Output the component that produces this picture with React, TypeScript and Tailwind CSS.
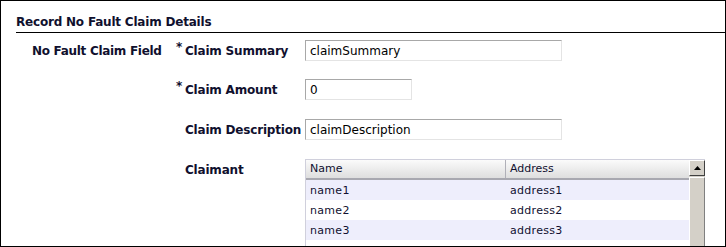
import React from "react";

const font = { fontFamily: '"DejaVu Sans", Verdana, sans-serif' };

function Field({ star, label, children, className = "" }: { star?: boolean; label: string; children: React.ReactNode; className?: string }) {
  return (
    <div className={`flex ${className}`}>
      <div className="w-[9px] shrink-0 text-[12px] leading-[12px] pt-[1px] font-bold text-[#10102e]">{star ? "*" : ""}</div>
      <div className="w-[120px] shrink-0 flex items-center h-[21px] text-[12px] font-bold text-[#10102e] whitespace-nowrap tracking-[-0.2px]">{label}</div>
      {children}
    </div>
  );
}

function Input({ value, w }: { value: string; w: string }) {
  return (
    <div className={`${w} h-[21px] border border-t-[#a8a8a8] border-l-[#a8a8a8] border-r-[#e4e4e4] border-b-[#e4e4e4] bg-white flex items-center pl-[4px] text-[12px] text-black`}>
      {value}
    </div>
  );
}

export default function App() {
  const rows = ["1", "2", "3", "4"];
  return (
    <div style={font} className="w-[726px] h-[247px] border border-black bg-white overflow-hidden">
      <div className="ml-[15px] pt-[14px] pb-[3px] border-b border-black text-[12px] leading-[14px] font-bold text-[#10102e] tracking-[-0.2px]">
        Record No Fault Claim Details
      </div>
      <div className="flex pt-[7px]">
        <div className="w-[175px] pl-[31px] shrink-0 h-[21px] flex items-center text-[12px] font-bold text-[#10102e] whitespace-nowrap tracking-[-0.3px]">
          No Fault Claim Field
        </div>
        <div className="flex flex-col">
          <Field star label="Claim Summary">
            <Input value="claimSummary" w="w-[257px]" />
          </Field>
          <Field star label="Claim Amount" className="mt-[18px]">
            <Input value="0" w="w-[107px]" />
          </Field>
          <Field label="Claim Description" className="mt-[19px]">
            <Input value="claimDescription" w="w-[257px]" />
          </Field>
          <Field label="Claimant" className="mt-[19px]">
            <div className="w-[400px] h-[90px] flex border-t border-l border-[#d0d0dc] text-[11px] text-[#101030]" style={{ fontFamily: '"DejaVu Sans", sans-serif' }}>
              <div className="flex-1 flex flex-col">
                <div className="h-[20px] shrink-0 flex bg-gradient-to-b from-[#fbfbfb] to-[#dedede] border-b-2 border-[#a8a8b0]">
                  <div className="w-[200px] pl-[4px] flex items-center border-r border-[#b0b0b8]">Name</div>
                  <div className="flex-1 pl-[4px] flex items-center">Address</div>
                </div>
                {rows.map((r, i) => (
                  <div key={r} className={`h-[20px] shrink-0 flex leading-[13px] pt-[4px] ${i % 2 === 0 ? "bg-[#eeeefc]" : "bg-white"}`}>
                    <div className="w-[200px] pl-[4px] tracking-[0.3px]">name{r}</div>
                    <div className="flex-1 pl-[4px] tracking-[0.3px]">address{r}</div>
                  </div>
                ))}
              </div>
              <div className="w-[16px] flex flex-col bg-[#d4d0c8]">
                <div className="h-[16px] border border-t-white border-l-white border-r-[#404040] border-b-[#404040] bg-[#d4d0c8] flex items-center justify-center">
                  <svg width="7" height="4" viewBox="0 0 7 4"><path d="M3.5 0 L7 4 L0 4 Z" fill="#000" /></svg>
                </div>
                <div className="flex-1 mt-[1px] border-l border-t border-white border-r border-r-[#808080]" />
              </div>
            </div>
          </Field>
        </div>
      </div>
    </div>
  );
}
